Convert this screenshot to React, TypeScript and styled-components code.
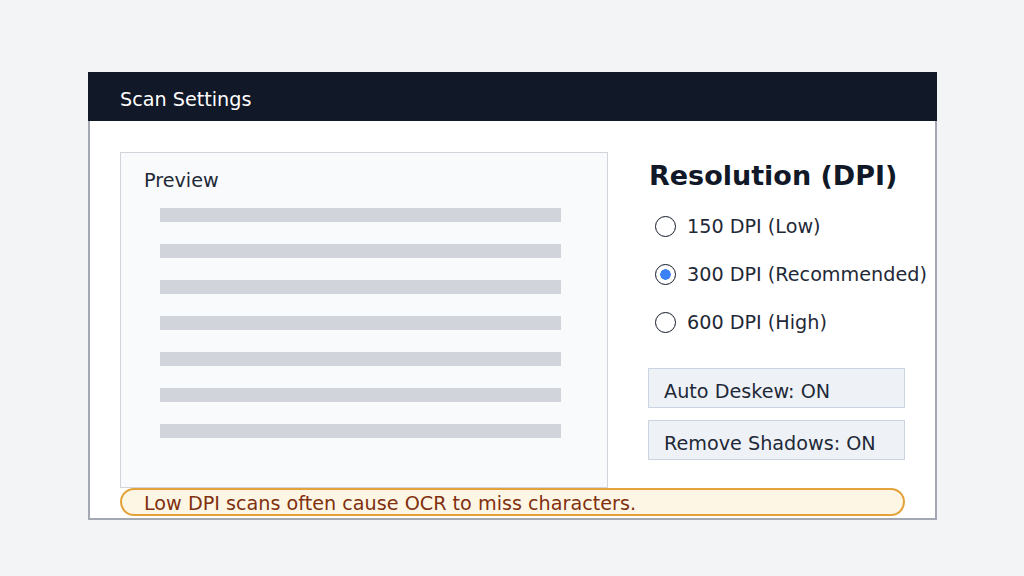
import { FC } from 'react';
import styled, { createGlobalStyle } from 'styled-components';

const GlobalStyle = createGlobalStyle`
  html, body {
    margin: 0;
    padding: 0;
    background: #f3f4f6;
    font-family: "DejaVu Sans", "Liberation Sans", sans-serif;
  }
  * { box-sizing: border-box; }
`;

const Page = styled.div`
  width: 1024px;
  height: 576px;
  padding: 72px 87px 0 88px;
`;

const Window = styled.div`
  width: 849px;
  display: flex;
  flex-direction: column;
`;

const Header = styled.div`
  height: 49px;
  background: #111827;
  color: #ffffff;
  font-size: 19.2px;
  display: flex;
  align-items: center;
  padding-left: 32px;
  padding-top: 5px;
`;

const Body = styled.div`
  background: #ffffff;
  border: 2px solid #a3a8b3;
  border-top: none;
  padding: 31px 30px 2px 30px;
  display: flex;
  flex-direction: column;
`;

const Main = styled.div`
  display: flex;
  gap: 40px;
`;

const Preview = styled.div`
  width: 488px;
  height: 336px;
  background: #f8fafc;
  border: 1px solid #d1d5db;
  padding: 16px 0 0 23px;
`;

const PreviewTitle = styled.div`
  font-size: 19.2px;
  color: #1f2937;
  margin-bottom: 16px;
`;

const Lines = styled.div`
  display: flex;
  flex-direction: column;
  gap: 22px;
  padding-left: 16px;
`;

const Line = styled.div`
  width: 401px;
  height: 14px;
  background: #d1d5db;
`;

const Side = styled.div`
  width: 257px;
  display: flex;
  flex-direction: column;
  padding-top: 8px;
`;

const Heading = styled.div`
  font-size: 27px;
  font-weight: bold;
  color: #111827;
  margin-left: 1px;
  margin-bottom: 24px;
`;

const Options = styled.div`
  display: flex;
  flex-direction: column;
  gap: 26px;
  padding-left: 7px;
  white-space: nowrap;
`;

const Option = styled.label`
  display: flex;
  align-items: center;
  gap: 11px;
  font-size: 19.2px;
  color: #1f2937;
  height: 22px;
`;

const Radio = styled.span<{ $checked: boolean }>`
  width: 21px;
  height: 21px;
  border-radius: 50%;
  border: 1.5px solid #111827;
  background: ${({ $checked }) =>
    $checked ? 'radial-gradient(circle, #3b82f6 0 5px, #ffffff 5.5px)' : '#ffffff'};
  flex-shrink: 0;
`;

const Toggles = styled.div`
  margin-top: 35px;
  display: flex;
  flex-direction: column;
  gap: 12px;
`;

const Toggle = styled.div`
  height: 40px;
  background: #eef2f7;
  border: 1.5px solid #cbd5e1;
  font-size: 19.2px;
  color: #1f2937;
  display: flex;
  align-items: center;
  padding: 6px 0 0 15px;
`;

const Warning = styled.div`
  height: 28px;
  border: 2px solid #e3a33a;
  border-radius: 14px;
  background: #fef6e4;
  color: #80300f;
  font-size: 19.2px;
  display: flex;
  align-items: center;
  padding: 2px 0 0 22px;
`;

const options = [
  { label: '150 DPI (Low)', checked: false },
  { label: '300 DPI (Recommended)', checked: true },
  { label: '600 DPI (High)', checked: false },
];

const App: FC = () => (
  <>
    <GlobalStyle />
    <Page>
      <Window>
        <Header>Scan Settings</Header>
        <Body>
          <Main>
            <Preview>
              <PreviewTitle>Preview</PreviewTitle>
              <Lines>
                {Array.from({ length: 7 }).map((_, i) => (
                  <Line key={i} />
                ))}
              </Lines>
            </Preview>
            <Side>
              <Heading>Resolution (DPI)</Heading>
              <Options>
                {options.map((o) => (
                  <Option key={o.label}>
                    <Radio $checked={o.checked} />
                    {o.label}
                  </Option>
                ))}
              </Options>
              <Toggles>
                <Toggle>Auto Deskew: ON</Toggle>
                <Toggle>Remove Shadows: ON</Toggle>
              </Toggles>
            </Side>
          </Main>
          <Warning>Low DPI scans often cause OCR to miss characters.</Warning>
        </Body>
      </Window>
    </Page>
  </>
);

export default App;
